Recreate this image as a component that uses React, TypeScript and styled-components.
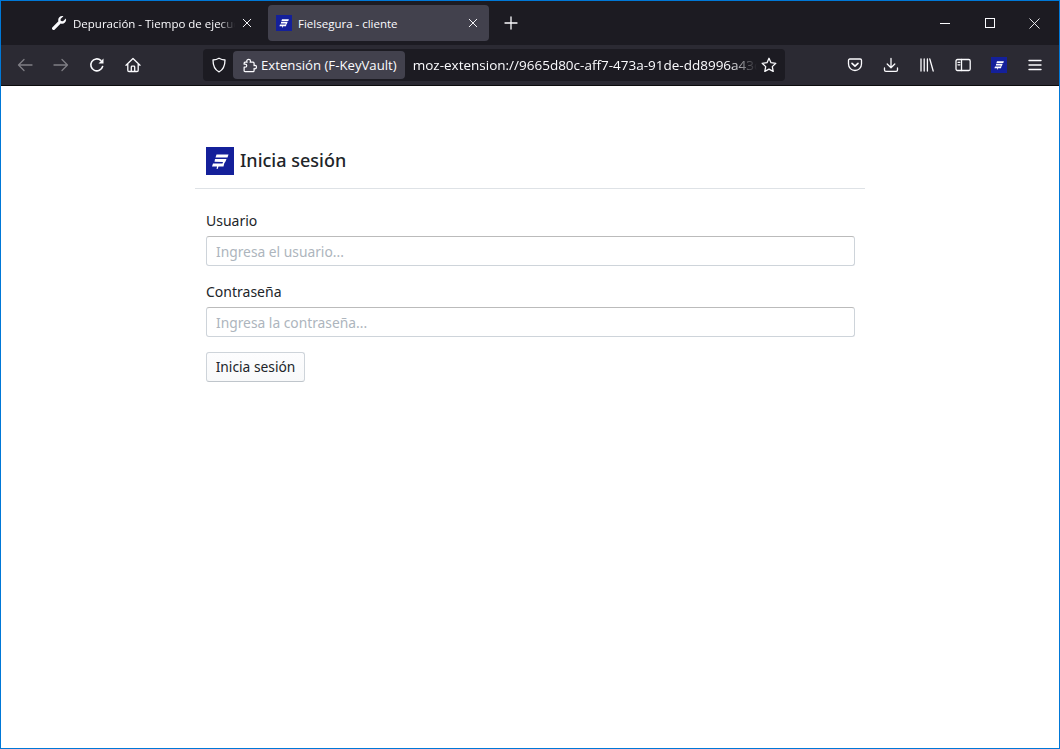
import styled, { createGlobalStyle } from "styled-components";

const GlobalStyle = createGlobalStyle`
  html, body {
    margin: 0;
    padding: 0;
    background: #fff;
  }
  * {
    box-sizing: border-box;
  }
`;

const Window = styled.div`
  width: 1060px;
  height: 749px;
  border: 1px solid #0078d7;
  display: flex;
  flex-direction: column;
  overflow: hidden;
  font-family: "Open Sans", "Noto Sans", sans-serif;
`;

const TabBar = styled.div`
  height: 44px;
  flex: none;
  background: #1c1b22;
  display: flex;
  align-items: center;
  padding-left: 39px;
`;

const Tab = styled.div<{ $active?: boolean }>`
  width: ${(p) => (p.$active ? "221px" : "219px")};
  height: 36px;
  margin-right: ${(p) => (p.$active ? "0" : "9px")};
  border-radius: 4px;
  background: ${(p) => (p.$active ? "#42414d" : "transparent")};
  display: flex;
  align-items: center;
  padding-left: ${(p) => (p.$active ? "8px" : "11px")};
  color: #fbfbfe;
  font-size: 11.5px;
  gap: 6px;
`;

const TabTitle = styled.span<{ $fade?: boolean }>`
  width: ${(p) => (p.$fade ? "162px" : "163px")};
  white-space: nowrap;
  overflow: hidden;
  ${(p) =>
    p.$fade &&
    `-webkit-mask-image: linear-gradient(to right, #000 90%, transparent);
     mask-image: linear-gradient(to right, #000 90%, transparent);`}
`;

const NewTab = styled.div`
  margin-left: 14px;
  display: flex;
`;

const WindowControls = styled.div`
  margin-left: auto;
  display: flex;
  align-items: center;
  height: 44px;
  padding-right: 2px;
`;

const WindowButton = styled.div`
  width: 45px;
  height: 44px;
  display: flex;
  align-items: center;
  justify-content: center;
`;

const Toolbar = styled.div`
  height: 40px;
  flex: none;
  background: #2b2a33;
  display: flex;
  align-items: center;
  padding-left: 6px;
`;

const ToolButton = styled.div<{ $w?: number }>`
  width: ${(p) => p.$w ?? 36}px;
  height: 32px;
  flex: none;
  display: flex;
  align-items: center;
  justify-content: center;
`;

const UrlBar = styled.div`
  width: 582px;
  height: 32px;
  flex: none;
  margin-left: 52px;
  border-radius: 4px;
  background: #1c1b22;
  display: flex;
  align-items: center;
  padding-left: 4px;
  color: #fbfbfe;
`;

const Identity = styled.div`
  flex: none;
  height: 28px;
  margin-left: 2px;
  padding: 0 8px 0 10px;
  border-radius: 4px;
  background: #42414d;
  display: flex;
  align-items: center;
  gap: 3px;
  font-size: 13.2px;
  white-space: nowrap;
`;

const UrlText = styled.div`
  width: 344px;
  flex: none;
  margin-left: 8px;
  font-size: 13.5px;
  white-space: nowrap;
  overflow: hidden;
  -webkit-mask-image: linear-gradient(to right, #000 92%, transparent);
  mask-image: linear-gradient(to right, #000 92%, transparent);
`;

const ToolGroup = styled.div`
  display: flex;
  align-items: center;
  margin-left: 52px;
`;

const Divider = styled.div`
  height: 1px;
  flex: none;
  background: #0c0c0d;
`;

const Page = styled.main`
  flex: 1;
  background: #fff;
  display: flex;
  flex-direction: column;
  align-items: center;
  padding-top: 60px;
  color: #212529;
  font-family: "Noto Sans", "Open Sans", sans-serif;
`;

const Card = styled.div`
  width: 670px;
`;

const CardHeader = styled.header`
  height: 43px;
  border-bottom: 1px solid #dee2e6;
  padding: 1px 11px 0;
  display: flex;
  align-items: flex-start;
  gap: 6px;
`;

const Title = styled.h1`
  margin: 0;
  font-size: 18px;
  line-height: 26px;
  font-weight: 500;
`;

const Form = styled.form`
  padding: 22px 10px 0 11px;
  display: flex;
  flex-direction: column;
  align-items: flex-start;
`;

const Field = styled.div`
  width: 100%;
  margin-bottom: 15px;

  & + & {
    margin-top: 1px;
  }
`;

const Label = styled.label`
  display: block;
  font-size: 14px;
  line-height: 20px;
  margin-bottom: 5px;
`;

const Input = styled.input`
  display: block;
  width: 100%;
  height: 30px;
  padding: 0 9px;
  border: 1px solid #ced4da;
  border-top-color: #bbb;
  border-radius: 3px;
  background: #fff;
  font-family: inherit;
  font-size: 13.8px;
  color: #212529;

  &::placeholder {
    color: #adb5bd;
    opacity: 1;
  }
`;

const Submit = styled.button`
  width: 99px;
  height: 30px;
  padding: 0 0 2px;
  border: 1px solid #ced4da;
  border-bottom-color: #bfc5cb;
  border-radius: 3px;
  background: linear-gradient(#fdfdfe, #f8f9fa);
  color: #212529;
  font-family: inherit;
  font-size: 13.8px;
`;

const Logo = ({ size }: { size: number }) => (
  <svg width={size} height={size} viewBox="0 0 28 28" style={{ flex: "none" }}>
    <rect width="28" height="28" fill="#14209a" />
    <path
      d="M10.500 7.500 L22.500 7.500 L21.500 10.500 L9.500 10.500 Z M9 12 L20.500 12 L19.500 14.500 L18.300 16.200 L17.500 19.500 L12.500 19.500 L11.600 22 L10.600 22 L11 19.500 L6 19.500 L7 16.500 L16.500 16.500 L17 15 L8.500 14.800 Z"
      fill="#fff"
    />
  </svg>
);

const Stroke = ({ w = 16, children }: { w?: number; children: React.ReactNode }) => (
  <svg
    width={w}
    height={w}
    viewBox="0 0 16 16"
    fill="none"
    stroke="currentColor"
    strokeWidth="1.3"
    strokeLinecap="round"
    strokeLinejoin="round"
    style={{ flex: "none", color: "#fbfbfe" }}
  >
    {children}
  </svg>
);

const Dim = styled.span`
  display: flex;
  opacity: 0.4;
`;

const App = () => (
  <>
    <GlobalStyle />
    <Window>
      <TabBar>
        <Tab>
          <svg width="16" height="16" viewBox="0 0 16 16" style={{ flex: "none" }}>
            <path
              d="M11.2 1c-2.3 0-4 1.8-4 4 0 .5.1 1 .2 1.300L1.500 12.200c-.7.700-.7 1.600 0 2.300s1.600.7 2.300 0l5.900-5.900c.4.100.9.200 1.400.200 2.200 0 4-1.700 4-4 0-.5-.1-1-.2-1.400L12 6.300 9.800 6 9.500 3.900 12.400 1.200C12 1.100 11.600 1 11.200 1z"
              fill="#fbfbfe"
            />
          </svg>
          <TabTitle $fade>Depuración - Tiempo de ejecución</TabTitle>
          <Stroke w={12}>
            <path d="M3 3l10 10M13 3L3 13" />
          </Stroke>
        </Tab>
        <Tab $active>
          <Logo size={16} />
          <TabTitle>Fielsegura - cliente</TabTitle>
          <Stroke w={12}>
            <path d="M3 3l10 10M13 3L3 13" />
          </Stroke>
        </Tab>
        <NewTab>
          <Stroke>
            <path d="M8 2v12M2 8h12" />
          </Stroke>
        </NewTab>
        <WindowControls>
          <WindowButton>
            <svg width="10" height="10" viewBox="0 0 10 10">
              <path d="M0 5.500h10" stroke="#fbfbfe" strokeWidth="1" />
            </svg>
          </WindowButton>
          <WindowButton>
            <svg width="10" height="10" viewBox="0 0 10 10">
              <rect x=".5" y=".5" width="9" height="9" fill="none" stroke="#fbfbfe" />
            </svg>
          </WindowButton>
          <WindowButton>
            <svg width="11" height="11" viewBox="0 0 11 11">
              <path d="M.5.500l10 10M10.500.500l-10 10" stroke="#fbfbfe" strokeWidth=".9" />
            </svg>
          </WindowButton>
        </WindowControls>
      </TabBar>
      <Toolbar>
        <ToolButton>
          <Dim>
            <Stroke>
              <path d="M15 8H1.500M7 2.500L1.500 8 7 13.500" />
            </Stroke>
          </Dim>
        </ToolButton>
        <ToolButton>
          <Dim>
            <Stroke>
              <path d="M1 8h13.500M9 2.500L14.500 8 9 13.500" />
            </Stroke>
          </Dim>
        </ToolButton>
        <ToolButton>
          <Stroke>
            <path d="M13.600 9.500A6 6 0 1 1 11.800 3.400" strokeWidth="1.600" />
            <path d="M14.500 1.500v5h-5z" fill="#fbfbfe" stroke="none" />
          </Stroke>
        </ToolButton>
        <ToolButton>
          <Stroke>
            <path d="M1 8.200L8 1.500l7 6.700M2.800 7v6.300c0 .7.500 1.200 1.200 1.200h8c.7 0 1.200-.5 1.200-1.200V7M6.300 14.500V10c0-.5.300-.8.800-.8h1.800c.5 0 .8.300.8.800v4.500" />
          </Stroke>
        </ToolButton>
        <UrlBar>
          <ToolButton $w={24}>
            <Stroke>
              <path d="M8 1.200c2 1.200 4 1.700 6 1.800 0 5.500-1.500 9.700-6 11.800C3.500 12.700 2 8.500 2 3c2-.1 4-.6 6-1.800z" />
            </Stroke>
          </ToolButton>
          <Identity>
            <Stroke w={15}>
              <path d="M6 1.500c1.200 0 2 .8 2 1.800 0 .5-.2.9-.4 1.200h3.200c.6 0 1 .4 1 1v2.700c.3-.2.600-.3 1-.3.900 0 1.600.8 1.600 1.800s-.7 1.800-1.600 1.800c-.4 0-.7-.1-1-.3v2.300c0 .6-.4 1-1 1H2.200c-.6 0-1-.4-1-1V9.800h1c1 0 1.800-.7 1.800-1.600s-.8-1.600-1.800-1.600h-1v-1.100c0-.6.400-1 1-1h2.200c-.2-.3-.4-.7-.4-1.200 0-1 .8-1.800 2-1.800z" />
            </Stroke>
            Extensión (F-KeyVault)
          </Identity>
          <UrlText>moz-extension://9665d80c-aff7-473a-91de-dd8996a43c1e/index.html</UrlText>
          <ToolButton $w={24}>
            <Stroke>
              <path d="M8 1.300l2 4.400 4.800.6-3.500 3.300.9 4.800L8 12.100l-4.200 2.300.9-4.800L1.200 6.300 6 5.700z" />
            </Stroke>
          </ToolButton>
        </UrlBar>
        <ToolGroup>
          <ToolButton>
            <Stroke>
              <path d="M2.800 2h10.400c.7 0 1.300.6 1.300 1.300V7c0 3.600-2.900 6.500-6.500 6.500S1.500 10.600 1.500 7V3.300C1.500 2.600 2.100 2 2.800 2z" />
              <path d="M5 6.300l3 2.900 3-2.900" strokeWidth="1.600" />
            </Stroke>
          </ToolButton>
          <ToolButton>
            <Stroke>
              <path d="M8 1.500v9M4.200 7L8 10.800 11.800 7M1.500 11v2c0 .8.600 1.400 1.400 1.400h10.200c.8 0 1.400-.6 1.400-1.400v-2" />
            </Stroke>
          </ToolButton>
          <ToolButton>
            <Stroke>
              <path d="M2 2v12M5.200 2v12M8.400 2v12M10.800 2l3.400 12" />
            </Stroke>
          </ToolButton>
          <ToolButton>
            <Stroke>
              <rect x="1" y="2.500" width="14.200" height="11" rx="1.500" />
              <path d="M6.500 2.500v11M3 5.300h1.800M3 7.800h1.800" />
            </Stroke>
          </ToolButton>
          <ToolButton>
            <Logo size={16} />
          </ToolButton>
          <ToolButton>
            <Stroke>
              <path d="M2 3.500h12M2 8h12M2 12.500h12" strokeWidth="1.400" />
            </Stroke>
          </ToolButton>
        </ToolGroup>
      </Toolbar>
      <Divider />
      <Page>
        <Card>
          <CardHeader>
            <Logo size={28} />
            <Title>Inicia sesión</Title>
          </CardHeader>
          <Form>
            <Field>
              <Label>Usuario</Label>
              <Input placeholder="Ingresa el usuario..." />
            </Field>
            <Field>
              <Label>Contraseña</Label>
              <Input placeholder="Ingresa la contraseña..." />
            </Field>
            <Submit type="button">Inicia sesión</Submit>
          </Form>
        </Card>
      </Page>
    </Window>
  </>
);

export default App;
